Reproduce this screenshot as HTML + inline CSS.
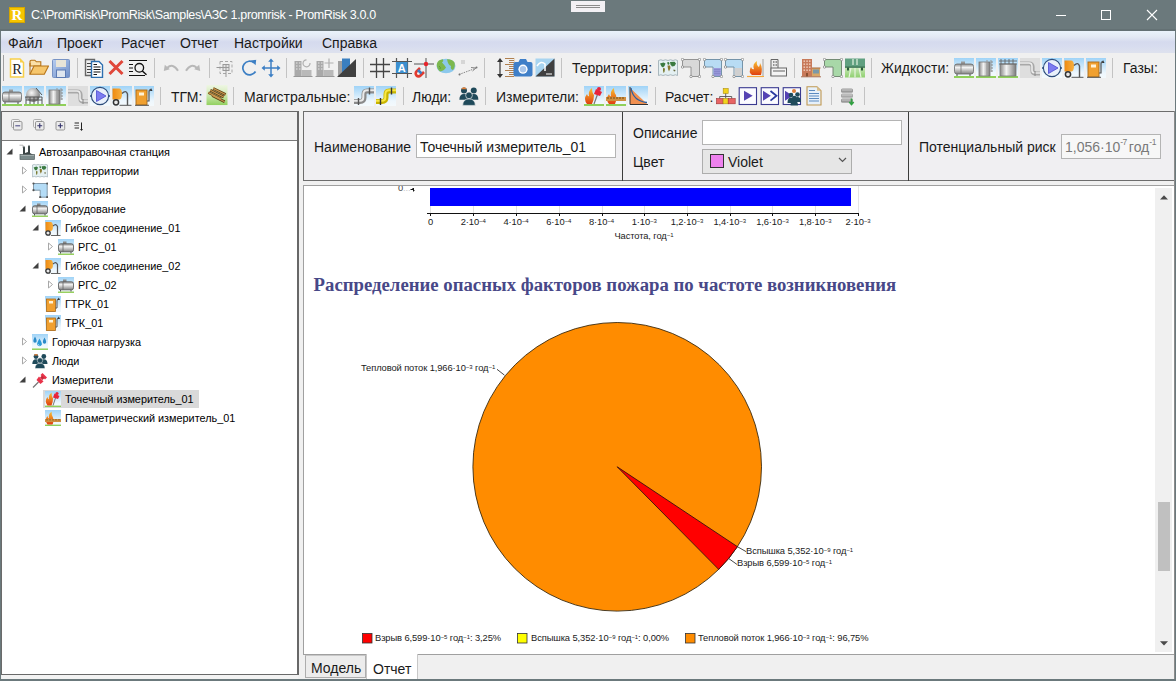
<!DOCTYPE html>
<html><head><meta charset="utf-8"><style>
*{margin:0;padding:0;box-sizing:border-box}
html,body{width:1176px;height:681px;overflow:hidden;background:#f0f0f0;font-family:"Liberation Sans",sans-serif;color:#000}
.a{position:absolute}
.mi{position:absolute;top:35px;font-size:14px;color:#1a1a1a;white-space:nowrap;line-height:16px}
.tb{position:absolute;font-size:14px;color:#1a1a1a;white-space:nowrap;line-height:16px}
.sep{position:absolute;width:1px;background:#c3c3c3}
.ic{position:absolute;overflow:visible}
.tr{position:absolute;font-size:10.85px;color:#000;white-space:nowrap;line-height:13px}
.lbl{position:absolute;font-size:14px;color:#1a1a1a;white-space:nowrap;line-height:16px}
.ch{position:absolute;font-size:9.35px;color:#1a1a1a;white-space:nowrap;line-height:10px;letter-spacing:-0.1px}
.ch sup{font-size:6px;vertical-align:top;position:relative;top:1px;line-height:6px;margin-left:0.2px}
.lbl sup{font-size:9px;vertical-align:top;position:relative;top:-1px;line-height:9px}
.wb{position:absolute;background:#6b797c}
</style></head><body>
<svg width="0" height="0" style="position:absolute">
<defs>
<linearGradient id="sky" x1="0" y1="0" x2="0" y2="1"><stop offset="0" stop-color="#9fd3f7"/><stop offset="0.75" stop-color="#eef7fd"/><stop offset="1" stop-color="#f4f9fc"/></linearGradient>
<linearGradient id="cyl" x1="0" y1="0" x2="0" y2="1"><stop offset="0" stop-color="#8c8c8c"/><stop offset="0.35" stop-color="#f2f2f2"/><stop offset="1" stop-color="#808080"/></linearGradient>
<linearGradient id="cylv" x1="0" y1="0" x2="1" y2="0"><stop offset="0" stop-color="#888"/><stop offset="0.4" stop-color="#f4f4f4"/><stop offset="1" stop-color="#7a7a7a"/></linearGradient>
<radialGradient id="sph" cx="0.4" cy="0.35" r="0.7"><stop offset="0" stop-color="#f8f8f8"/><stop offset="1" stop-color="#777"/></radialGradient>
<linearGradient id="orng" x1="0" y1="0" x2="1" y2="0"><stop offset="0" stop-color="#f08a10"/><stop offset="1" stop-color="#f6b040"/></linearGradient>
<linearGradient id="fire" x1="0" y1="0" x2="0" y2="1"><stop offset="0" stop-color="#f8c030"/><stop offset="1" stop-color="#e04010"/></linearGradient>
<linearGradient id="flop" x1="0" y1="0" x2="1" y2="1"><stop offset="0" stop-color="#b8cdf0"/><stop offset="1" stop-color="#6f8fc8"/></linearGradient>

<!-- toolbar 1 -->
<symbol id="t-r" viewBox="0 0 20 20"><path d="M1.5 1H11L14.5 4.5V19H1.5Z" fill="#fff" stroke="#f7cf4a" stroke-width="1.5"/><path d="M11 1V4.5H14.5Z" fill="#f7cf4a"/><text x="8" y="15.8" font-family="Liberation Serif" font-size="14.5" text-anchor="middle" fill="#222">R</text></symbol>
<symbol id="t-open" viewBox="0 0 20 20"><path d="M1 3.5Q1 2.2 2.3 2.2H5.8L7.4 3.8H11.8V8H1Z" fill="#fbe0a8" stroke="#b67418" stroke-width="1.1"/><path d="M1 16.2V5" stroke="#b67418" stroke-width="1.1"/><path d="M1 16.2L5 8H19.5L15.3 16.2Z" fill="#f6c66c" stroke="#b67418" stroke-width="1.1"/></symbol>
<symbol id="t-save" viewBox="0 0 20 20"><rect x="1.5" y="1.5" width="17" height="18" rx="1" fill="url(#flop)" stroke="#7893c4" stroke-width="1"/><rect x="5" y="2" width="10" height="7" fill="#e8e4d8"/><rect x="5.5" y="12" width="9" height="7.5" fill="#dfe6ef" stroke="#5d7bb3" stroke-width="1"/></symbol>
<symbol id="t-copy" viewBox="0 0 20 20"><path d="M1.5 1.5H10.5V17.5H1.5Z" fill="#eee" stroke="#666" stroke-width="1.4"/><path d="M3 5.5H8M3 8.5H8M3 11.5H8M3 14.5H8" stroke="#444" stroke-width="1"/><path d="M7.5 3.5H15L18.5 7V19.5H7.5Z" fill="#fff" stroke="#2d6fb0" stroke-width="1.4"/><path d="M9.5 6.5H13M9.5 9H16.5M9.5 11.5H16.5M9.5 14H16.5M9.5 16.5H13" stroke="#111" stroke-width="1.2"/></symbol>
<symbol id="t-del" viewBox="0 0 20 20"><path d="M3.5 3L16.5 16M16.5 3L3.5 16" stroke="#e0473a" stroke-width="3"/></symbol>
<symbol id="t-find" viewBox="0 0 20 20"><path d="M1 2.5H19M1 17.5H17M1 6.5H5M1 10H5M1 13.5H5" stroke="#111" stroke-width="1.1"/><circle cx="11.3" cy="9.8" r="4.3" fill="none" stroke="#111" stroke-width="1.3"/><path d="M14.3 13L18.5 16.8" stroke="#111" stroke-width="1.5"/></symbol>
<symbol id="t-undo" viewBox="0 0 20 20"><path d="M17 12.8Q12 4.5 6 10" fill="none" stroke="#b8b8b8" stroke-width="2"/><path d="M2.8 13L3.8 6.8L8.8 11.2Z" fill="#b8b8b8"/></symbol>
<symbol id="t-redo" viewBox="0 0 20 20"><g transform="translate(20 0) scale(-1 1)"><path d="M17 12.8Q12 4.5 6 10" fill="none" stroke="#b8b8b8" stroke-width="2"/><path d="M2.8 13L3.8 6.8L8.8 11.2Z" fill="#b8b8b8"/></g></symbol>
<symbol id="t-sel" viewBox="0 0 20 20"><path d="M4 3.5H16V15.5H4Z" fill="none" stroke="#a8a8a8" stroke-width="1" stroke-dasharray="3 2"/><rect x="7" y="6.5" width="6" height="6" fill="#e4e4e4" stroke="#999" stroke-width="1"/><path d="M10 6.5V12.5M7 9.5H13M0.5 9.5H7M10 12.5V19" stroke="#999" stroke-width="1"/></symbol>
<symbol id="t-rot" viewBox="0 0 20 20"><path d="M15 4.8A6.8 6.8 0 1 0 16.5 13.5" fill="none" stroke="#3c7fc4" stroke-width="1.7"/><path d="M12 2.6L17.2 1.8L16.6 7.2Z" fill="#3c7fc4"/></symbol>
<symbol id="t-move" viewBox="0 0 20 20"><path d="M10 2V18M2 10H18" stroke="#3c7fc4" stroke-width="1.5"/><path d="M10 0.5L12.8 3.8H7.2ZM10 19.5L12.8 16.2H7.2ZM0.5 10L3.8 7.2V12.8ZM19.5 10L16.2 7.2V12.8Z" fill="#3c7fc4"/></symbol>
<symbol id="t-b1" viewBox="0 0 20 20"><rect x="1.5" y="3" width="7" height="15" fill="#a9a9a9"/><path d="M3 5H4.5M6 5H7.5M3 8H4.5M6 8H7.5M3 11H4.5M6 11H7.5" stroke="#e8e8e8" stroke-width="1.2"/><rect x="8.5" y="12" width="10" height="6" fill="#b9b9b9"/><path d="M0.5 18.5H19.5" stroke="#999" stroke-width="1"/><path d="M17 5A3.5 3.5 0 1 1 13.5 1.8" fill="none" stroke="#b0b0b0" stroke-width="1.2"/></symbol>
<symbol id="t-b2" viewBox="0 0 20 20"><rect x="1.5" y="3" width="7" height="15" fill="#a9a9a9"/><path d="M3 5H4.5M6 5H7.5M3 8H4.5M6 8H7.5M3 11H4.5M6 11H7.5" stroke="#e8e8e8" stroke-width="1.2"/><rect x="8.5" y="12" width="10" height="6" fill="#b9b9b9"/><path d="M0.5 18.5H19.5" stroke="#999" stroke-width="1"/><path d="M14 0.5V10M9.5 5H18.5" stroke="#b0b0b0" stroke-width="1.2"/></symbol>
<symbol id="t-b3" viewBox="0 0 20 20"><rect x="1" y="3" width="7" height="16" fill="#a0a0a0"/><rect x="5" y="0.5" width="8" height="18" fill="#3a7fc0"/><path d="M0 19L19 1V19Z" fill="#404040"/></symbol>
<symbol id="t-grid" viewBox="0 0 20 20"><path d="M0 6.5H20M0 13.5H20M6.5 0V20M13.5 0V20" stroke="#444" stroke-width="1.3"/></symbol>
<symbol id="t-grida" viewBox="0 0 20 20"><path d="M0 3.5H20M0 15.5H20M4.5 0V20M15.5 0V20" stroke="#555" stroke-width="1.2"/><rect x="4" y="4" width="11.5" height="11" fill="#3b8fd0"/><text x="9.8" y="14" font-family="Liberation Sans" font-weight="bold" font-size="11" text-anchor="middle" fill="#fff">A</text></symbol>
<symbol id="t-mag" viewBox="0 0 20 20"><path d="M0 6H20M12 0V20" stroke="#555" stroke-width="1"/><path d="M6 10L2.5 13.5A2.5 2.5 0 0 0 6.5 17.5L10 14" fill="none" stroke="#e23a2e" stroke-width="2.6"/><path d="M4 12L7.5 15.5" stroke="#3c7fc4" stroke-width="2.6"/><circle cx="12" cy="6" r="2.2" fill="#e8232a"/></symbol>
<symbol id="t-globe" viewBox="0 0 20 20"><ellipse cx="10" cy="8" rx="9.5" ry="7.3" fill="#8cc8ec"/><path d="M0.8 6Q2 1.5 7 1.2Q8 3 6 4.5Q8.5 7 10 9.5Q8 13 4 13.5Q0.5 11 0.8 6ZM11 1.2Q16 1 18.5 4.5Q19.5 8.5 17 12Q14 11 15 8Q12 7 11 1.2Z" fill="#7cb84e"/><path d="M3 8Q5 9 4 11" stroke="#5a9a3a" stroke-width="1" fill="none"/></symbol>
<symbol id="t-route" viewBox="0 0 20 20"><path d="M1 16.5L17 10.5" stroke="#888" stroke-width="1" stroke-dasharray="1.5 1"/><path d="M13 9.5L18 10L14.5 13" fill="none" stroke="#888" stroke-width="1"/><circle cx="1.5" cy="16.5" r="1" fill="#777"/><circle cx="18.5" cy="9.5" r="1" fill="#777"/><path d="M3 3H7M3 5H7" stroke="#bbb" stroke-width="1.2"/></symbol>
<symbol id="t-varr" viewBox="0 0 10 20"><path d="M5 2V18" stroke="#333" stroke-width="1.2"/><path d="M5 0L8 4H2ZM5 20L8 16H2Z" fill="#333"/></symbol>
<symbol id="t-ruler" viewBox="0 0 12 20"><path d="M1 0.5H11M5 2.5H11M5 4.5H11M1 6.5H11M5 8.5H11M5 10.5H11M1 12.5H11M5 14.5H11M5 16.5H11M1 18.5H11" stroke="#b08050" stroke-width="1"/><path d="M10.5 0V19" stroke="#e8d8c0" stroke-width="1"/></symbol>
<symbol id="t-cam" viewBox="0 0 20 20"><rect x="0.5" y="4" width="19" height="14.5" rx="2" fill="#3f7fc8"/><path d="M5.5 4L7 1H13L14.5 4Z" fill="#3f7fc8"/><circle cx="10" cy="11.2" r="4.6" fill="#fff"/><circle cx="10" cy="11.2" r="3.2" fill="#a9c6ea"/></symbol>
<symbol id="t-img" viewBox="0 0 20 20"><rect x="0.5" y="0.5" width="19" height="18" fill="#a8d4f0"/><path d="M0.5 18.5L19.5 0.5V18.5Z" fill="#404040"/><path d="M2 8Q6 2 10 6V13" fill="none" stroke="#fff" stroke-width="1.5"/><path d="M11 16H17" stroke="#fff" stroke-width="1"/></symbol>
<symbol id="t-map" viewBox="0 0 20 20"><path d="M0.5 2.5Q3 1 5 2.5Q7.5 1 10 2.5Q12.5 1 15 2.5Q17.5 1 19.5 2.5V17.5Q17.5 16 15 17.5Q12.5 16 10 17.5Q7.5 16 5 17.5Q3 16 0.5 17.5Z" fill="#e4f0f2" stroke="#98a8b0" stroke-width="0.8"/><path d="M2 5.5L5.5 4.5L7.5 5.5L6.5 8L5 9.5L3.5 8.5Z" fill="#3a7a40"/><path d="M5 10L7 10.5L6.5 14L5.5 15L5 12.5Z" fill="#7a7a30"/><path d="M9 4.5L11 4L11.5 6L10 7Z" fill="#3a7a40"/><path d="M9.5 7.5L12 7.5L12.5 10L11 13.5L10 11Z" fill="#8a7a30"/><path d="M12 4L16.5 3.8L18 5.5L16.5 8L14 8.5L12.5 6.5Z" fill="#3a7a40"/><path d="M15.5 11.5L17.5 12L17 13.5L15.5 13Z" fill="#6a6a40"/></symbol>
<symbol id="t-lgray" viewBox="0 0 20 20"><path d="M1.5 1.5H18.5V18.5H10V9H1.5Z" fill="#d8d8d8" stroke="#8a8a8a" stroke-width="0.9"/><g fill="#fff" stroke="#777" stroke-width="0.7"><circle cx="1.5" cy="1.5" r="1.2"/><circle cx="18.5" cy="1.5" r="1.2"/><circle cx="18.5" cy="18.5" r="1.2"/><circle cx="10" cy="18.5" r="1.2"/><circle cx="1.5" cy="9" r="1.2"/></g></symbol>
<symbol id="t-lblue" viewBox="0 0 20 20"><path d="M1.5 1.5H18.5V18.5H10V9H1.5Z" fill="#b8dcf4" stroke="#6a8aa0" stroke-width="0.9"/><rect x="10.5" y="10" width="7.5" height="8" fill="#a0a0e0"/><path d="M11 11.5H17.5M11 13.5H17.5M11 15.5H17.5M12 10.5V18M14 10.5V18M16 10.5V18" stroke="#7a7ac0" stroke-width="0.5"/><g fill="#fff" stroke="#777" stroke-width="0.7"><circle cx="1.5" cy="1.5" r="1.2"/><circle cx="18.5" cy="1.5" r="1.2"/><circle cx="18.5" cy="18.5" r="1.2"/><circle cx="10" cy="18.5" r="1.2"/><circle cx="1.5" cy="9" r="1.2"/></g></symbol>
<symbol id="t-lbgray" viewBox="0 0 20 20"><path d="M1.5 1.5H18.5V18.5H10V9H1.5Z" fill="#b8dcf4" stroke="#6a8aa0" stroke-width="0.9"/><rect x="10.5" y="10" width="7.5" height="8" fill="#d0d0d0"/><g fill="#fff" stroke="#777" stroke-width="0.7"><circle cx="1.5" cy="1.5" r="1.2"/><circle cx="18.5" cy="1.5" r="1.2"/><circle cx="18.5" cy="18.5" r="1.2"/><circle cx="10" cy="18.5" r="1.2"/><circle cx="1.5" cy="9" r="1.2"/></g></symbol>
<symbol id="t-fire" viewBox="0 0 20 20"><path d="M17 1V18" stroke="#c8c8c8" stroke-width="2"/><path d="M1 18.5H18" stroke="#f4a840" stroke-width="1.2"/><path d="M6 17Q2 14 5 9Q6 12 8 11Q6 6 11 3Q10 7 13 9Q14 7 14 5Q17 10 15 17Z" fill="url(#fire)"/></symbol>
<symbol id="t-bld" viewBox="0 0 20 20"><path d="M3 18V1.5H10V10" fill="#eee" stroke="#666" stroke-width="1"/><rect x="3" y="10" width="15.5" height="8" fill="#f4f4f4" stroke="#666" stroke-width="1"/><path d="M5 4H6.5M7.5 4H9M5 7H6.5M7.5 7H9" stroke="#777" stroke-width="1.3"/><path d="M5 13H17" stroke="#777" stroke-width="1.2"/></symbol>
<symbol id="t-brick" viewBox="0 0 20 20"><rect x="1" y="1" width="10" height="17.5" fill="#c87a5a"/><g fill="#f4d8c8"><rect x="2.5" y="2.5" width="1.5" height="1.3"/><rect x="5.3" y="2.5" width="1.5" height="1.3"/><rect x="8" y="2.5" width="1.5" height="1.3"/><rect x="2.5" y="5.5" width="1.5" height="1.3"/><rect x="5.3" y="5.5" width="1.5" height="1.3"/><rect x="8" y="5.5" width="1.5" height="1.3"/><rect x="2.5" y="8.5" width="1.5" height="1.3"/><rect x="5.3" y="8.5" width="1.5" height="1.3"/><rect x="8" y="8.5" width="1.5" height="1.3"/><rect x="2.5" y="11.5" width="1.5" height="1.3"/><rect x="5.3" y="11.5" width="1.5" height="1.3"/><rect x="8" y="11.5" width="1.5" height="1.3"/></g><rect x="5" y="15" width="2" height="3.5" fill="#8a5030"/><rect x="11" y="10" width="8" height="8.5" fill="#d8a868"/><rect x="11" y="9.5" width="8.5" height="1" fill="#a86838"/><rect x="12" y="11.5" width="6" height="4" fill="#7a98a8"/><path d="M0 18.8H20" stroke="#a06040" stroke-width="0.9"/></symbol>
<symbol id="t-lgreen" viewBox="0 0 20 20"><path d="M1.5 1.5H18.5V18.5H10V9H1.5Z" fill="#a8d8a8" stroke="#6a806a" stroke-width="0.9"/><g fill="#fff" stroke="#777" stroke-width="0.7"><circle cx="1.5" cy="1.5" r="1.2"/><circle cx="18.5" cy="1.5" r="1.2"/><circle cx="18.5" cy="18.5" r="1.2"/><circle cx="10" cy="18.5" r="1.2"/><circle cx="1.5" cy="9" r="1.2"/></g></symbol>
<symbol id="t-road" viewBox="0 0 20 20"><defs><linearGradient id="rg" x1="0" y1="0" x2="0" y2="1"><stop offset="0" stop-color="#c8e8b8"/><stop offset="1" stop-color="#90d070"/></linearGradient></defs><rect x="0" y="9" width="20" height="10.5" fill="url(#rg)"/><path d="M6 9.5L4 19.5M14 9.5L16 19.5M10 9.5V19.5" stroke="#e8f4e0" stroke-width="1.2"/><rect x="0" y="0.5" width="20" height="9" fill="#60a080"/><path d="M8 1V7M12 1V7" stroke="#d8ecd8" stroke-width="1.3"/><rect x="0" y="8.5" width="20" height="1.2" fill="#3a7050"/><rect x="2" y="9.5" width="2" height="3" fill="#2a5a3a"/><rect x="16" y="9.5" width="2" height="3" fill="#2a5a3a"/></symbol>
<!-- liquids -->
<symbol id="t-tank" viewBox="0 0 20 20"><rect x="0" y="0" width="20" height="19" fill="url(#sky)"/><rect x="0" y="18" width="20" height="2" fill="#8fd05a"/><rect x="7" y="3.5" width="4" height="3" fill="#999"/><rect x="0.5" y="6" width="19" height="10" rx="2.5" fill="url(#cyl)" stroke="#6a6a6a" stroke-width="0.8"/><path d="M7 6V16" stroke="#777" stroke-width="0.8"/><path d="M3 16V18M16 16V18" stroke="#666" stroke-width="1.2"/></symbol>
<symbol id="t-silo" viewBox="0 0 20 20"><rect x="0" y="0" width="20" height="19" fill="url(#sky)"/><rect x="0" y="18" width="20" height="2" fill="#8fd05a"/><rect x="3" y="4" width="11" height="14" fill="url(#cylv)" stroke="#777" stroke-width="0.8"/><path d="M11 2V18M15 2V14" stroke="#999" stroke-width="1"/><path d="M15 4H17M15 7H17M15 10H17M15 13H17" stroke="#888" stroke-width="1"/></symbol>
<symbol id="t-tank2" viewBox="0 0 20 20"><rect x="0" y="0" width="20" height="19" fill="url(#sky)"/><rect x="0" y="18" width="20" height="2" fill="#8fd05a"/><rect x="2" y="6" width="16" height="12" fill="url(#cylv)" stroke="#777" stroke-width="0.8"/><path d="M1 3H19M1 6H19M3 1V6M7 1V6M11 1V6M15 1V6" stroke="#666" stroke-width="0.9"/></symbol>
<symbol id="t-pipe" viewBox="0 0 20 20"><rect x="0" y="0" width="20" height="20" fill="#dedede"/><path d="M0 5.5H9Q12.5 5.5 12.5 9V12.5Q12.5 15.5 15.5 15.5H20" fill="none" stroke="#a8a8a8" stroke-width="4.2"/><path d="M0 5H9Q12 5 12 8.5V12.5Q12 15 15.5 15H20" fill="none" stroke="#ececec" stroke-width="1.6"/><path d="M15 13V18" stroke="#888" stroke-width="1"/></symbol>
<symbol id="t-pump" viewBox="0 0 20 20"><rect x="0" y="0" width="20" height="20" fill="url(#sky)"/><circle cx="10" cy="10" r="8.6" fill="#e8f0fb" stroke="#2b4b7a" stroke-width="1.1"/><path d="M6.5 4.5L16 10L6.5 15.5Z" fill="#7c7cf0" stroke="#4a4ad0" stroke-width="0.8"/><path d="M0 10H1.5M18.5 10H20" stroke="#2b4b7a" stroke-width="1.4"/></symbol>
<symbol id="t-flex" viewBox="0 0 20 20"><rect x="0" y="0" width="20" height="20" fill="url(#sky)"/><path d="M0.5 2.5H7Q10 2.5 10 8Q10 13.5 7 13.5H0.5Z" fill="url(#orng)"/><path d="M10 7.5Q14 3.5 15.5 8V19.2" fill="none" stroke="#555" stroke-width="1.4"/><circle cx="4" cy="16.3" r="2.6" fill="#e8e8e8" stroke="#333" stroke-width="1.5"/><path d="M7.5 19.3H19.5" stroke="#555" stroke-width="1"/></symbol>
<symbol id="t-disp" viewBox="0 0 20 20"><rect x="0" y="0" width="20" height="20" fill="url(#sky)"/><rect x="2" y="4" width="11" height="15" fill="#f0a030" stroke="#a86818" stroke-width="0.9"/><rect x="5" y="6.5" width="5" height="3" fill="#fff3d8"/><path d="M13 15H15V6Q15 3.5 17 3.5" fill="none" stroke="#555" stroke-width="1.2"/><path d="M17 2L18.5 5H16Z" fill="#333"/><path d="M1 19.3H15" stroke="#555" stroke-width="1"/></symbol>
<symbol id="t-sphere" viewBox="0 0 20 20"><rect x="0" y="0" width="20" height="19" fill="url(#sky)"/><rect x="0" y="18" width="20" height="2" fill="#8fd05a"/><circle cx="9" cy="9" r="7" fill="url(#sph)"/><path d="M1 11H18M2 14H18M2 11V18M6 11V18M10 11V18M14 11V18M18 11V18M12 2L18 9" stroke="#555" stroke-width="1"/></symbol>
<!-- toolbar 2 others -->
<symbol id="t-tgm" viewBox="0 0 22 22"><defs><linearGradient id="gg" x1="0" y1="0" x2="0" y2="1"><stop offset="0" stop-color="#eef6e4"/><stop offset="0.45" stop-color="#d4ecb8"/><stop offset="1" stop-color="#92d060"/></linearGradient></defs><rect x="0" y="0" width="22" height="21" fill="url(#gg)"/><path d="M2 8L15 14.5M4 5.5L18 12.5M7 3.5L20 10M6 11L19 17.5" stroke="#5a3a10" stroke-width="2.8"/><path d="M2 8L15 14.5M4 5.5L18 12.5M7 3.5L20 10M6 11L19 17.5" stroke="#c89850" stroke-width="1.3"/></symbol>
<symbol id="t-spipe" viewBox="0 0 20 20"><rect x="0" y="0" width="20" height="20" fill="url(#sky)"/><path d="M20 5H13Q10 5 10 8.5V11.5Q10 15.5 6 15.5H0" fill="none" stroke="#8a8a8a" stroke-width="5"/><path d="M20 4.3H13Q9.3 4.3 9.3 8.5V11.5Q9.3 14.8 6 14.8H0" fill="none" stroke="#eaeaea" stroke-width="2"/><path d="M15.5 1.5V8.5M4.5 12V19" stroke="#555" stroke-width="1.4"/></symbol>
<symbol id="t-ypipe" viewBox="0 0 20 20"><rect x="0" y="0" width="20" height="20" fill="url(#sky)"/><path d="M20 5H13Q10 5 10 8.5V11.5Q10 15.5 6 15.5H0" fill="none" stroke="#c8b400" stroke-width="5"/><path d="M20 4.3H13Q9.3 4.3 9.3 8.5V11.5Q9.3 14.8 6 14.8H0" fill="none" stroke="#f8e848" stroke-width="2"/><path d="M15.5 1.5V8.5M4.5 12V19" stroke="#333" stroke-width="1.4"/></symbol>
<symbol id="t-people" viewBox="0 0 16 16"><circle cx="4" cy="3.5" r="2.4" fill="#1f4a5a"/><path d="M1.8 2.5A2.4 2.4 0 0 1 6.2 2.5Z" fill="#e0803a"/><circle cx="11.8" cy="3.5" r="2.4" fill="#1f4a5a"/><path d="M0.3 11Q0.3 6.3 4 6.3Q7.7 6.3 7.7 11ZM8.1 11Q8.1 6.3 11.8 6.3Q15.5 6.3 15.5 11Z" fill="#1f4a5a"/><circle cx="8" cy="7.5" r="2.7" fill="#1f4a5a" stroke="#f0f0f0" stroke-width="0.5"/><path d="M3 15.5Q3 10.3 8 10.3Q13 10.3 13 15.5Z" fill="#1f4a5a" stroke="#f0f0f0" stroke-width="0.5"/></symbol>
<symbol id="t-m1" viewBox="0 0 20 20"><rect x="0" y="0" width="20" height="20" fill="url(#sky)"/><path d="M0 19H20" stroke="#8fd05a" stroke-width="2"/><path d="M3 18Q-1 13 3 8Q4 11 5 10Q4 5 8 2Q8 7 10 9Q10 14 8 18Z" fill="url(#fire)"/><path d="M10 18L14 7" stroke="#777" stroke-width="1.2"/><path d="M12 3L18 6L16 10L10 8Z" fill="#e8233a"/><circle cx="15" cy="3" r="2" fill="#e8233a"/></symbol>
<symbol id="t-m2" viewBox="0 0 20 20"><rect x="0" y="0" width="20" height="20" fill="url(#sky)"/><path d="M0 19H20" stroke="#8fd05a" stroke-width="2"/><path d="M3 18Q-1 13 3 8Q4 11 5 10Q4 5 8 2Q8 7 10 9Q11 14 9 18Z" fill="url(#fire)"/><rect x="0" y="11" width="20" height="4" fill="#d09040"/><path d="M2 11V13M5 11V13M8 11V13M11 11V13M14 11V13M17 11V13" stroke="#7a4a10" stroke-width="1"/></symbol>
<symbol id="t-m3" viewBox="0 0 20 20"><rect x="0" y="0" width="20" height="20" fill="url(#sky)"/><path d="M2 2Q3 15 19 18" fill="#f0a060" stroke="none"/><path d="M2 2V18H19" fill="#f09050" stroke="none"/><path d="M2 1V18.5H20" fill="none" stroke="#333" stroke-width="1"/><path d="M3 2Q5 15 19 16.5" fill="none" stroke="#2a5fa0" stroke-width="1.3"/></symbol>
<symbol id="t-hier" viewBox="0 0 20 20"><rect x="7.2" y="2.5" width="5" height="5" fill="#f2d41c" stroke="#b09010" stroke-width="0.6"/><path d="M9.7 7.5V10.5M3.7 10.5H15.7M3.7 10.5V12.6M15.7 10.5V12.6M9.7 10.5V12.6" stroke="#555" stroke-width="0.9"/><rect x="0.5" y="12.6" width="6.6" height="5.2" fill="#e86464" stroke="#a03030" stroke-width="0.6"/><rect x="7.1" y="12.6" width="5.1" height="5.2" fill="#f2d41c" stroke="#b09010" stroke-width="0.6"/><rect x="12.2" y="12.6" width="7" height="5.2" fill="#e86464" stroke="#a03030" stroke-width="0.6"/></symbol>
<symbol id="t-play" viewBox="0 0 20 20"><rect x="1.2" y="1.7" width="17.3" height="16.8" fill="#fbfbff" stroke="#3a3a90" stroke-width="1.1"/><path d="M6 4.7L14.7 9.8L6 14.8Z" fill="#5542b4"/></symbol>
<symbol id="t-ff" viewBox="0 0 20 20"><rect x="1.2" y="1.7" width="17.3" height="16.8" fill="#fbfbff" stroke="#3a3a90" stroke-width="1.1"/><path d="M3 4.7L10.8 9.8L3 14.8Z" fill="#5542b4"/><path d="M10.5 5L16.5 9.8L10.5 14.6" fill="none" stroke="#2a3aa0" stroke-width="1.8"/></symbol>
<symbol id="t-calcp" viewBox="0 0 20 20"><rect x="1.2" y="1.7" width="17.3" height="16.8" fill="#fbfbff" stroke="#3a3a90" stroke-width="1.1"/><path d="M3 4.7L10.8 9.8L3 14.8Z" fill="#5542b4"/><circle cx="12" cy="5" r="2" fill="#e0803a"/><circle cx="9" cy="9" r="2.3" fill="#1f4a5a"/><circle cx="15.5" cy="8.5" r="2.3" fill="#1f4a5a"/><path d="M5.5 17Q5.5 11.5 9 11.5Q12.5 11.5 12.5 17ZM12 16Q12 11 15.5 11Q19 11 19 16Z" fill="#1f4a5a"/><circle cx="12.3" cy="12" r="2.3" fill="#1f4a5a"/><path d="M8.5 19.5Q8.5 14.5 12.3 14.5Q16 14.5 16 19.5Z" fill="#1f4a5a"/></symbol>
<symbol id="t-doc" viewBox="0 0 20 20"><path d="M3 0.8H13L17 4.8V19H3Z" fill="#e6f0fa" stroke="#c09850" stroke-width="1.1"/><path d="M13 0.8V4.8H17Z" fill="#d8c090"/><path d="M5 4.5H11M5 7.5H15M5 10H15M5 12.5H15M5 15H15" stroke="#5a8ac0" stroke-width="1"/></symbol>
<symbol id="t-db" viewBox="0 0 20 20"><rect x="4" y="2.5" width="12" height="4.3" rx="1.5" fill="#9a9a9a"/><rect x="4" y="7.5" width="12" height="4.3" rx="1.5" fill="#a8a8a8"/><rect x="4" y="12.5" width="12" height="4.3" rx="1.5" fill="#9a9a9a"/><path d="M5 4H15M5 9H15M5 14H15" stroke="#d8d8d8" stroke-width="0.8"/><path d="M14.5 12.5V18.5M12.3 16L14.5 18.5L16.7 16" fill="none" stroke="#30a040" stroke-width="1.6"/></symbol>
<!-- left tree toolbar -->
<symbol id="l-collapse" viewBox="0 0 12 12"><rect x="0.5" y="0.5" width="8" height="8" rx="1.2" fill="#f4f4f4" stroke="#a8a8a8" stroke-width="0.9"/><rect x="2.5" y="2.5" width="8.5" height="8.5" rx="1.2" fill="#ececec" stroke="#8a8a8a" stroke-width="0.9"/><path d="M4.3 6.8H9.2" stroke="#50508a" stroke-width="1.1"/></symbol>
<symbol id="l-expand" viewBox="0 0 12 12"><rect x="0.5" y="0.5" width="8" height="8" rx="1.2" fill="#f4f4f4" stroke="#a8a8a8" stroke-width="0.9"/><rect x="2.5" y="2.5" width="8.5" height="8.5" rx="1.2" fill="#ececec" stroke="#8a8a8a" stroke-width="0.9"/><path d="M4.3 6.8H9.2M6.75 4.3V9.3" stroke="#30306a" stroke-width="1.1"/></symbol>
<symbol id="l-plus" viewBox="0 0 12 12"><rect x="1" y="2.5" width="8.7" height="8.5" rx="1.2" fill="#ececec" stroke="#8a8a8a" stroke-width="0.9"/><path d="M2.9 6.8H7.8M5.35 4.3V9.3" stroke="#30306a" stroke-width="1.1"/></symbol>
<symbol id="l-sort" viewBox="0 0 12 12"><path d="M0.6 4H5M0.6 6.5H5M0.6 9H5" stroke="#222" stroke-width="1.1"/><path d="M0.6 6.5H5" stroke="#888" stroke-width="1.1"/><path d="M7.5 3.5V10.5" stroke="#222" stroke-width="1"/><path d="M6 10L7.5 12L9 10Z" fill="#222"/></symbol>
<!-- tree icons 16x16 -->
<symbol id="i-factory" viewBox="0 0 16 16"><path d="M0.5 1.2H4V4" fill="none" stroke="#b8b8b8" stroke-width="1"/><path d="M4 11V3.5L5 1.8L6 3.5V9L9 8V2.5L10 0.8L11 2.5V9L14.5 11Z" fill="#3a4444"/><rect x="1" y="10.5" width="14.5" height="5" fill="#7a8a8a" stroke="#556060" stroke-width="0.7"/><path d="M1.5 11.5H15" stroke="#aab4b4" stroke-width="0.8"/></symbol>
<symbol id="i-map-old" viewBox="0 0 16 16"><path d="M0.5 1.5Q4 0 8 1.5Q12 0 15.5 1.5V13.5Q12 12 8 13.5Q4 12 0.5 13.5Z" fill="#e4f2f2" stroke="#9aa8b0" stroke-width="0.8"/><path d="M2 4L5 3.5L6 5L5 6.5H3.5ZM8 3.5L12.5 3L14 4.5L12 6L9.5 5.5Z" fill="#2e6a38"/><path d="M4 7L5.5 7.5L5 11L4.2 10ZM9 6.5L11 6.8L10.5 10.5L9.5 11Z" fill="#8a7030"/><rect x="13" y="9" width="1.2" height="1" fill="#335"/></symbol>
<symbol id="i-terr" viewBox="0 0 16 16"><path d="M1.5 1.5H15.2V15.2H8.2V8.2H1.5Z" fill="#b4dcf6" stroke="#7890a0" stroke-width="0.9"/><circle cx="1.5" cy="1.5" r="1.1" fill="#555"/><circle cx="15.2" cy="1.5" r="1.1" fill="#555"/><circle cx="1.5" cy="8.2" r="1.1" fill="#555"/><circle cx="8.2" cy="15.2" r="1.1" fill="#555"/><circle cx="15.2" cy="15.2" r="1.1" fill="#555"/></symbol>
<symbol id="i-tank" viewBox="0 0 16 16"><rect x="0" y="0" width="16" height="15" fill="url(#sky)"/><rect x="0" y="14.5" width="16" height="1.5" fill="#98d060"/><rect x="5" y="2.5" width="3.5" height="2.5" fill="#888"/><rect x="0.5" y="4.8" width="15" height="8" rx="2" fill="url(#cyl)" stroke="#555" stroke-width="0.8"/><path d="M5 4.8V12.8" stroke="#666" stroke-width="0.8"/><path d="M2.5 12.8V14.5M13 12.8V14.5" stroke="#555" stroke-width="1"/></symbol>
<symbol id="i-flex" viewBox="0 0 16 16"><rect x="0" y="0" width="16" height="16" fill="url(#sky)"/><path d="M0.5 2H5.5Q8 2 8 6.5Q8 11 5.5 11H0.5Z" fill="url(#orng)"/><path d="M8 6Q11 3 12.5 6.5V15.5" fill="none" stroke="#555" stroke-width="1.2"/><circle cx="3" cy="13" r="2.2" fill="#e8e8e8" stroke="#333" stroke-width="1.3"/><path d="M6 15.5H15.5" stroke="#555" stroke-width="0.9"/></symbol>
<symbol id="i-disp" viewBox="0 0 16 16"><rect x="0" y="0" width="16" height="16" fill="url(#sky)"/><rect x="1.5" y="3" width="9" height="12.5" fill="#f0a030" stroke="#a86818" stroke-width="0.8"/><rect x="4" y="5" width="4" height="2.5" fill="#fff3d8"/><path d="M10.5 12H12V5Q12 2.8 13.8 2.8" fill="none" stroke="#555" stroke-width="1"/><path d="M13.8 1.5L15 4H12.6Z" fill="#333"/></symbol>
<symbol id="i-drops" viewBox="0 0 16 16"><rect x="0" y="0" width="16" height="14.5" fill="url(#sky)"/><path d="M0 15.2H16" stroke="#8fd05a" stroke-width="1.5"/><path d="M3 2.5Q1 6 1.3 7A1.7 1.7 0 0 0 4.7 7Q5 6 3 2.5Z" fill="#2a8ac8"/><path d="M12.5 3.5Q10.5 7 10.8 8A1.7 1.7 0 0 0 14.2 8Q14.5 7 12.5 3.5Z" fill="#2a8ac8"/><path d="M7.5 4.5Q4.8 9 5.2 10.5A2.4 2.4 0 0 0 9.8 10.5Q10.2 9 7.5 4.5Z" fill="#2a9ad8"/><path d="M6.5 10A1 1 0 0 0 7.5 11.5" stroke="#fff" stroke-width="0.6" fill="none"/></symbol>
<symbol id="i-people" viewBox="0 0 16 16"><circle cx="4" cy="3.5" r="2.4" fill="#1f4a5a"/><path d="M1.8 2.5A2.4 2.4 0 0 1 6.2 2.5Z" fill="#e0803a"/><circle cx="11.8" cy="3.5" r="2.4" fill="#1f4a5a"/><path d="M0.3 11Q0.3 6.3 4 6.3Q7.7 6.3 7.7 11ZM8.1 11Q8.1 6.3 11.8 6.3Q15.5 6.3 15.5 11Z" fill="#1f4a5a"/><circle cx="8" cy="7.5" r="2.7" fill="#1f4a5a" stroke="#fff" stroke-width="0.5"/><path d="M3 15.5Q3 10.3 8 10.3Q13 10.3 13 15.5Z" fill="#1f4a5a" stroke="#fff" stroke-width="0.5"/></symbol>
<symbol id="i-pin" viewBox="0 0 16 16"><path d="M1 15.5L6.5 10" stroke="#777" stroke-width="1.2"/><path d="M4.5 8L8.5 12L11.5 9.5L7 4.5Z" fill="#e8334a"/><path d="M8.5 3L13 7.5L15 5.5L10.5 1Z" fill="#e8334a"/><path d="M8 5.5L10 3.5L12.5 6L10.5 8Z" fill="#c82838"/></symbol>
<symbol id="i-m1" viewBox="0 0 16 16"><rect x="0" y="0" width="16" height="16" fill="url(#sky)"/><path d="M0 15.3H16" stroke="#8fd05a" stroke-width="1.4"/><path d="M2.5 14.5Q-1 10 2.5 6Q3.3 8.8 4 8Q3.3 4 6.5 1.5Q6.5 5.5 8 7.5Q8 11.5 6.5 14.5Z" fill="url(#fire)"/><path d="M8 14.5L11 5.5" stroke="#777" stroke-width="1"/><path d="M9.5 2.5L14.5 5L13 8L8 6.5Z" fill="#e8233a"/><circle cx="12" cy="2.5" r="1.6" fill="#e8233a"/></symbol>
<symbol id="i-m2" viewBox="0 0 16 16"><rect x="0" y="0" width="16" height="16" fill="url(#sky)"/><path d="M0 15.3H16" stroke="#8fd05a" stroke-width="1.4"/><path d="M2.5 14.5Q-1 10 2.5 6Q3.3 8.8 4 8Q3.3 4 6.5 1.5Q6.5 5.5 8 7.5Q9 11.5 7.5 14.5Z" fill="url(#fire)"/><rect x="0" y="9" width="16" height="3" fill="#d09040"/><path d="M2 9V10.5M5 9V10.5M8 9V10.5M11 9V10.5M14 9V10.5" stroke="#7a4a10" stroke-width="0.8"/></symbol>
<symbol id="i-map" viewBox="0 0 20 20"><use href="#t-map"/></symbol></defs></svg>

<div class="a" style="left:0;top:0;width:1176px;height:31px;background:#6b797c"></div>
<div class="a" style="left:0;top:29px;width:1176px;height:2px;background:#647174"></div>
<div class="a" style="left:9px;top:7px;width:16px;height:16px;background:#f6c500;border:1px solid #d6a600;color:#fff;font-family:'Liberation Serif',serif;font-weight:bold;font-size:15px;line-height:15px;text-align:center">R</div>
<div class="a" style="left:31px;top:8px;font-size:12.5px;letter-spacing:-0.36px;color:#fff;white-space:nowrap;line-height:14px">C:\PromRisk\PromRisk\Samples\АЗС 1.promrisk - PromRisk 3.0.0</div>
<div class="a" style="left:571px;top:1px;width:34px;height:11px;background:#f2f0f4"></div>
<div class="a" style="left:576px;top:5px;width:24px;height:1px;background:#8a8a8a"></div>
<div class="a" style="left:576px;top:7px;width:24px;height:1px;background:#8a8a8a"></div>
<div class="a" style="left:1056px;top:15px;width:10px;height:1px;background:#fff"></div>
<div class="a" style="left:1101px;top:10px;width:10px;height:10px;border:1px solid #fff"></div>
<svg class="a" style="left:1146px;top:9px" width="12" height="12"><path d="M1 1L11 11M11 1L1 11" stroke="#fff" stroke-width="1.1"/></svg>
<div class="a" style="left:1px;top:31px;width:1174px;height:22px;background:linear-gradient(#eaf3fb 0px,#e3e9f4 6px,#d5daee 11px,#d8ddef 16px,#dde1ee 21px)"></div>
<div class="mi" style="left:8px">Файл</div>
<div class="mi" style="left:57px">Проект</div>
<div class="mi" style="left:121px">Расчет</div>
<div class="mi" style="left:180px">Отчет</div>
<div class="mi" style="left:234px">Настройки</div>
<div class="mi" style="left:322px">Справка</div>
<div class="a" style="left:1px;top:53px;width:1174px;height:58px;background:#f0f0f0"></div>
<div class="a" style="left:3px;top:55px;width:1px;height:26px;background:#a0a0a0"></div>
<svg class="ic" style="left:9px;top:58px" width="20" height="20" viewBox="0 0 20 20"><use href="#t-r"/></svg>
<svg class="ic" style="left:29px;top:58px" width="20" height="20" viewBox="0 0 20 20"><use href="#t-open"/></svg>
<svg class="ic" style="left:51px;top:58px" width="20" height="20" viewBox="0 0 20 20"><use href="#t-save"/></svg>
<svg class="ic" style="left:84px;top:58px" width="20" height="20" viewBox="0 0 20 20"><use href="#t-copy"/></svg>
<svg class="ic" style="left:106px;top:58px" width="20" height="20" viewBox="0 0 20 20"><use href="#t-del"/></svg>
<svg class="ic" style="left:128px;top:58px" width="20" height="20" viewBox="0 0 20 20"><use href="#t-find"/></svg>
<svg class="ic" style="left:161px;top:58px" width="20" height="20" viewBox="0 0 20 20"><use href="#t-undo"/></svg>
<svg class="ic" style="left:183px;top:58px" width="20" height="20" viewBox="0 0 20 20"><use href="#t-redo"/></svg>
<svg class="ic" style="left:216px;top:58px" width="20" height="20" viewBox="0 0 20 20"><use href="#t-sel"/></svg>
<svg class="ic" style="left:239px;top:58px" width="20" height="20" viewBox="0 0 20 20"><use href="#t-rot"/></svg>
<svg class="ic" style="left:261px;top:58px" width="20" height="20" viewBox="0 0 20 20"><use href="#t-move"/></svg>
<svg class="ic" style="left:293px;top:58px" width="20" height="20" viewBox="0 0 20 20"><use href="#t-b1"/></svg>
<svg class="ic" style="left:315px;top:58px" width="20" height="20" viewBox="0 0 20 20"><use href="#t-b2"/></svg>
<svg class="ic" style="left:337px;top:58px" width="20" height="20" viewBox="0 0 20 20"><use href="#t-b3"/></svg>
<svg class="ic" style="left:370px;top:58px" width="20" height="20" viewBox="0 0 20 20"><use href="#t-grid"/></svg>
<svg class="ic" style="left:392px;top:58px" width="20" height="20" viewBox="0 0 20 20"><use href="#t-grida"/></svg>
<svg class="ic" style="left:414px;top:58px" width="20" height="20" viewBox="0 0 20 20"><use href="#t-mag"/></svg>
<svg class="ic" style="left:436px;top:58px" width="20" height="20" viewBox="0 0 20 20"><use href="#t-globe"/></svg>
<svg class="ic" style="left:458px;top:58px" width="20" height="20" viewBox="0 0 20 20"><use href="#t-route"/></svg>
<svg class="ic" style="left:490px;top:58px" width="20" height="20" viewBox="0 0 20 20"><use href="#t-varr"/></svg>
<svg class="ic" style="left:500px;top:58px" width="20" height="20" viewBox="0 0 20 20"><use href="#t-ruler"/></svg>
<svg class="ic" style="left:513px;top:58px" width="20" height="20" viewBox="0 0 20 20"><use href="#t-cam"/></svg>
<svg class="ic" style="left:535px;top:58px" width="20" height="20" viewBox="0 0 20 20"><use href="#t-img"/></svg>
<svg class="ic" style="left:658px;top:58px" width="20" height="20" viewBox="0 0 20 20"><use href="#t-map"/></svg>
<svg class="ic" style="left:681px;top:58px" width="20" height="20" viewBox="0 0 20 20"><use href="#t-lgray"/></svg>
<svg class="ic" style="left:703px;top:58px" width="20" height="20" viewBox="0 0 20 20"><use href="#t-lblue"/></svg>
<svg class="ic" style="left:724px;top:58px" width="20" height="20" viewBox="0 0 20 20"><use href="#t-lbgray"/></svg>
<svg class="ic" style="left:746px;top:58px" width="20" height="20" viewBox="0 0 20 20"><use href="#t-fire"/></svg>
<svg class="ic" style="left:768px;top:58px" width="20" height="20" viewBox="0 0 20 20"><use href="#t-bld"/></svg>
<svg class="ic" style="left:801px;top:58px" width="20" height="20" viewBox="0 0 20 20"><use href="#t-brick"/></svg>
<svg class="ic" style="left:823px;top:58px" width="20" height="20" viewBox="0 0 20 20"><use href="#t-lgreen"/></svg>
<svg class="ic" style="left:845px;top:58px" width="20" height="20" viewBox="0 0 20 20"><use href="#t-road"/></svg>
<svg class="ic" style="left:954px;top:58px" width="20" height="20" viewBox="0 0 20 20"><use href="#t-tank"/></svg>
<svg class="ic" style="left:976px;top:58px" width="20" height="20" viewBox="0 0 20 20"><use href="#t-silo"/></svg>
<svg class="ic" style="left:998px;top:58px" width="20" height="20" viewBox="0 0 20 20"><use href="#t-tank2"/></svg>
<svg class="ic" style="left:1020px;top:58px" width="20" height="20" viewBox="0 0 20 20"><use href="#t-pipe"/></svg>
<svg class="ic" style="left:1042px;top:58px" width="20" height="20" viewBox="0 0 20 20"><use href="#t-pump"/></svg>
<svg class="ic" style="left:1064px;top:58px" width="20" height="20" viewBox="0 0 20 20"><use href="#t-flex"/></svg>
<svg class="ic" style="left:1086px;top:58px" width="20" height="20" viewBox="0 0 20 20"><use href="#t-disp"/></svg>
<div class="sep" style="left:77px;top:58px;height:20px"></div>
<div class="sep" style="left:154px;top:58px;height:20px"></div>
<div class="sep" style="left:209px;top:58px;height:20px"></div>
<div class="sep" style="left:286px;top:58px;height:20px"></div>
<div class="sep" style="left:363px;top:58px;height:20px"></div>
<div class="sep" style="left:484px;top:58px;height:20px"></div>
<div class="sep" style="left:561px;top:58px;height:20px"></div>
<div class="sep" style="left:794px;top:58px;height:20px"></div>
<div class="sep" style="left:871px;top:58px;height:20px"></div>
<div class="sep" style="left:1112px;top:58px;height:20px"></div>
<div class="tb" style="left:572px;top:60px">Территория:</div>
<div class="tb" style="left:881px;top:60px">Жидкости:</div>
<div class="tb" style="left:1123px;top:60px">Газы:</div>
<svg class="ic" style="left:2px;top:86px" width="20" height="20" viewBox="0 0 20 20"><use href="#t-tank"/></svg>
<svg class="ic" style="left:24px;top:86px" width="20" height="20" viewBox="0 0 20 20"><use href="#t-sphere"/></svg>
<svg class="ic" style="left:46px;top:86px" width="20" height="20" viewBox="0 0 20 20"><use href="#t-silo"/></svg>
<svg class="ic" style="left:68px;top:86px" width="20" height="20" viewBox="0 0 20 20"><use href="#t-pipe"/></svg>
<svg class="ic" style="left:90px;top:86px" width="20" height="20" viewBox="0 0 20 20"><use href="#t-pump"/></svg>
<svg class="ic" style="left:112px;top:86px" width="20" height="20" viewBox="0 0 20 20"><use href="#t-flex"/></svg>
<svg class="ic" style="left:134px;top:86px" width="20" height="20" viewBox="0 0 20 20"><use href="#t-disp"/></svg>
<svg class="ic" style="left:354px;top:86px" width="20" height="20" viewBox="0 0 20 20"><use href="#t-spipe"/></svg>
<svg class="ic" style="left:376px;top:86px" width="20" height="20" viewBox="0 0 20 20"><use href="#t-ypipe"/></svg>
<svg class="ic" style="left:459px;top:86px" width="20" height="20" viewBox="0 0 20 20"><use href="#t-people"/></svg>
<svg class="ic" style="left:584px;top:86px" width="20" height="20" viewBox="0 0 20 20"><use href="#t-m1"/></svg>
<svg class="ic" style="left:606px;top:86px" width="20" height="20" viewBox="0 0 20 20"><use href="#t-m2"/></svg>
<svg class="ic" style="left:628px;top:86px" width="20" height="20" viewBox="0 0 20 20"><use href="#t-m3"/></svg>
<svg class="ic" style="left:716px;top:86px" width="20" height="20" viewBox="0 0 20 20"><use href="#t-hier"/></svg>
<svg class="ic" style="left:738px;top:86px" width="20" height="20" viewBox="0 0 20 20"><use href="#t-play"/></svg>
<svg class="ic" style="left:760px;top:86px" width="20" height="20" viewBox="0 0 20 20"><use href="#t-ff"/></svg>
<svg class="ic" style="left:782px;top:86px" width="20" height="20" viewBox="0 0 20 20"><use href="#t-calcp"/></svg>
<svg class="ic" style="left:804px;top:86px" width="20" height="20" viewBox="0 0 20 20"><use href="#t-doc"/></svg>
<svg class="ic" style="left:837px;top:86px" width="20" height="20" viewBox="0 0 20 20"><use href="#t-db"/></svg>
<svg class="ic" style="left:206px;top:85px" width="22" height="21" viewBox="0 0 22 21"><use href="#t-tgm"/></svg>
<div class="sep" style="left:160px;top:87px;height:18px"></div>
<div class="sep" style="left:233px;top:87px;height:18px"></div>
<div class="sep" style="left:403px;top:87px;height:18px"></div>
<div class="sep" style="left:485px;top:87px;height:18px"></div>
<div class="sep" style="left:655px;top:87px;height:18px"></div>
<div class="sep" style="left:831px;top:87px;height:18px"></div>
<div class="sep" style="left:864px;top:87px;height:18px"></div>
<div class="tb" style="left:171px;top:89px">ТГМ:</div>
<div class="tb" style="left:244px;top:89px">Магистральные:</div>
<div class="tb" style="left:412px;top:89px">Люди:</div>
<div class="tb" style="left:496px;top:89px">Измерители:</div>
<div class="tb" style="left:665px;top:89px">Расчет:</div>
<div class="a" style="left:1px;top:111px;width:298px;height:564px;border:1px solid #6a6a6a;border-right:2px solid #686868;background:#fff"></div>
<div class="a" style="left:2px;top:112px;width:295px;height:29px;background:#f0f0f0;border-bottom:1px solid #7a7a7a"></div>
<div class="a" style="left:2px;top:675px;width:296px;height:4px;background:#f3f3f3"></div>
<svg class="ic" style="left:10.5px;top:118.5px" width="12" height="12" viewBox="0 0 12 12"><use href="#l-collapse"/></svg>
<svg class="ic" style="left:32.5px;top:118.5px" width="12" height="12" viewBox="0 0 12 12"><use href="#l-expand"/></svg>
<svg class="ic" style="left:55px;top:118.5px" width="12" height="12" viewBox="0 0 12 12"><use href="#l-plus"/></svg>
<svg class="ic" style="left:74px;top:118.5px" width="12" height="12" viewBox="0 0 12 12"><use href="#l-sort"/></svg>
<svg class="ic" style="left:6px;top:148px" width="8" height="8"><path d="M0.5 6.5L6.5 6.5L6.5 0.5Z" fill="#404040"/></svg>
<svg class="ic" style="left:19px;top:144px" width="16" height="16" viewBox="0 0 16 16"><use href="#i-factory"/></svg>
<div class="tr" style="left:39px;top:146px">Автозаправочная станция</div>
<svg class="ic" style="left:21px;top:166px" width="8" height="9"><path d="M1.5 1L5.5 4.5L1.5 8Z" fill="none" stroke="#a8a8a8" stroke-width="1"/></svg>
<svg class="ic" style="left:32px;top:163px" width="16" height="16" viewBox="0 0 16 16"><use href="#i-map"/></svg>
<div class="tr" style="left:52px;top:165px">План территории</div>
<svg class="ic" style="left:21px;top:185px" width="8" height="9"><path d="M1.5 1L5.5 4.5L1.5 8Z" fill="none" stroke="#a8a8a8" stroke-width="1"/></svg>
<svg class="ic" style="left:32px;top:182px" width="16" height="16" viewBox="0 0 16 16"><use href="#i-terr"/></svg>
<div class="tr" style="left:52px;top:184px">Территория</div>
<svg class="ic" style="left:19px;top:205px" width="8" height="8"><path d="M0.5 6.5L6.5 6.5L6.5 0.5Z" fill="#404040"/></svg>
<svg class="ic" style="left:32px;top:201px" width="16" height="16" viewBox="0 0 16 16"><use href="#i-tank"/></svg>
<div class="tr" style="left:52px;top:203px">Оборудование</div>
<svg class="ic" style="left:32px;top:224px" width="8" height="8"><path d="M0.5 6.5L6.5 6.5L6.5 0.5Z" fill="#404040"/></svg>
<svg class="ic" style="left:45px;top:220px" width="16" height="16" viewBox="0 0 16 16"><use href="#i-flex"/></svg>
<div class="tr" style="left:65px;top:222px">Гибкое соединение_01</div>
<svg class="ic" style="left:47px;top:242px" width="8" height="9"><path d="M1.5 1L5.5 4.5L1.5 8Z" fill="none" stroke="#a8a8a8" stroke-width="1"/></svg>
<svg class="ic" style="left:58px;top:239px" width="16" height="16" viewBox="0 0 16 16"><use href="#i-tank"/></svg>
<div class="tr" style="left:78px;top:241px">РГС_01</div>
<svg class="ic" style="left:32px;top:262px" width="8" height="8"><path d="M0.5 6.5L6.5 6.5L6.5 0.5Z" fill="#404040"/></svg>
<svg class="ic" style="left:45px;top:258px" width="16" height="16" viewBox="0 0 16 16"><use href="#i-flex"/></svg>
<div class="tr" style="left:65px;top:260px">Гибкое соединение_02</div>
<svg class="ic" style="left:47px;top:280px" width="8" height="9"><path d="M1.5 1L5.5 4.5L1.5 8Z" fill="none" stroke="#a8a8a8" stroke-width="1"/></svg>
<svg class="ic" style="left:58px;top:277px" width="16" height="16" viewBox="0 0 16 16"><use href="#i-tank"/></svg>
<div class="tr" style="left:78px;top:279px">РГС_02</div>
<svg class="ic" style="left:45px;top:296px" width="16" height="16" viewBox="0 0 16 16"><use href="#i-disp"/></svg>
<div class="tr" style="left:65px;top:298px">ГТРК_01</div>
<svg class="ic" style="left:45px;top:315px" width="16" height="16" viewBox="0 0 16 16"><use href="#i-disp"/></svg>
<div class="tr" style="left:65px;top:317px">ТРК_01</div>
<svg class="ic" style="left:21px;top:337px" width="8" height="9"><path d="M1.5 1L5.5 4.5L1.5 8Z" fill="none" stroke="#a8a8a8" stroke-width="1"/></svg>
<svg class="ic" style="left:32px;top:334px" width="16" height="16" viewBox="0 0 16 16"><use href="#i-drops"/></svg>
<div class="tr" style="left:52px;top:336px">Горючая нагрузка</div>
<svg class="ic" style="left:21px;top:356px" width="8" height="9"><path d="M1.5 1L5.5 4.5L1.5 8Z" fill="none" stroke="#a8a8a8" stroke-width="1"/></svg>
<svg class="ic" style="left:32px;top:353px" width="16" height="16" viewBox="0 0 16 16"><use href="#i-people"/></svg>
<div class="tr" style="left:52px;top:355px">Люди</div>
<svg class="ic" style="left:19px;top:376px" width="8" height="8"><path d="M0.5 6.5L6.5 6.5L6.5 0.5Z" fill="#404040"/></svg>
<svg class="ic" style="left:32px;top:372px" width="16" height="16" viewBox="0 0 16 16"><use href="#i-pin"/></svg>
<div class="tr" style="left:52px;top:374px">Измерители</div>
<div class="a" style="left:43px;top:390px;width:156px;height:18px;background:#d9d9d9"></div>
<svg class="ic" style="left:45px;top:391px" width="16" height="16" viewBox="0 0 16 16"><use href="#i-m1"/></svg>
<div class="tr" style="left:65px;top:393px">Точечный измеритель_01</div>
<svg class="ic" style="left:45px;top:410px" width="16" height="16" viewBox="0 0 16 16"><use href="#i-m2"/></svg>
<div class="tr" style="left:65px;top:412px">Параметрический измеритель_01</div>
<div class="a" style="left:303px;top:111px;width:872px;height:70px;border:1px solid #6d6d6d;border-right:none;background:#f0eff2"></div>
<div class="lbl" style="left:314px;top:139px">Наименование</div>
<div class="a" style="left:416px;top:134px;width:200px;height:24px;background:#fff;border:1px solid #b4b4b4"></div>
<div class="lbl" style="left:420px;top:139px">Точечный измеритель_01</div>
<div class="a" style="left:622px;top:112px;width:1px;height:69px;background:#3c3c3c"></div>
<div class="lbl" style="left:633px;top:125px">Описание</div>
<div class="a" style="left:702px;top:120px;width:200px;height:25px;background:#fff;border:1px solid #b4b4b4"></div>
<div class="lbl" style="left:633px;top:154px">Цвет</div>
<div class="a" style="left:702px;top:149px;width:150px;height:25px;background:#e6e6e6;border:1px solid #adadad"></div>
<div class="a" style="left:710px;top:154px;width:14px;height:14px;background:#ee82ee;border:1px solid #333"></div>
<div class="lbl" style="left:728px;top:154px">Violet</div>
<svg class="a" style="left:838px;top:157px" width="9" height="6"><path d="M1 1L4.5 4.5L8 1" stroke="#555" fill="none" stroke-width="1.2"/></svg>
<div class="a" style="left:908px;top:112px;width:1px;height:69px;background:#3c3c3c"></div>
<div class="lbl" style="left:919px;top:139px">Потенциальный риск</div>
<div class="a" style="left:1061px;top:134px;width:100px;height:25px;background:#f7f7f7;border:1px solid #b4b4b4"></div>
<div class="lbl" style="left:1065px;top:139px;color:#7a7a7a">1,056·10<sup style="font-size:8.5px;letter-spacing:-0.5px">-7</sup><span style="margin-left:2px">год</span><sup style="font-size:8.5px;letter-spacing:-0.5px">-1</sup></div>
<div class="a" style="left:303px;top:185px;width:872px;height:470px;border:1px solid #a0a0a0;border-right:none;background:#fff"></div>
<div class="a" style="left:304px;top:186px;width:851px;height:468px;overflow:hidden">
<svg class="a" style="left:-304px;top:-186px" width="1176" height="681" viewBox="0 0 1176 681">
<line x1="430.5" y1="206" x2="430.5" y2="213" stroke="#e0e0e0" stroke-width="1"/>
<line x1="473.5" y1="206" x2="473.5" y2="213" stroke="#e0e0e0" stroke-width="1"/>
<line x1="516.5" y1="206" x2="516.5" y2="213" stroke="#e0e0e0" stroke-width="1"/>
<line x1="559.5" y1="206" x2="559.5" y2="213" stroke="#e0e0e0" stroke-width="1"/>
<line x1="602.5" y1="206" x2="602.5" y2="213" stroke="#e0e0e0" stroke-width="1"/>
<line x1="644.5" y1="206" x2="644.5" y2="213" stroke="#e0e0e0" stroke-width="1"/>
<line x1="687.5" y1="206" x2="687.5" y2="213" stroke="#e0e0e0" stroke-width="1"/>
<line x1="730.5" y1="206" x2="730.5" y2="213" stroke="#e0e0e0" stroke-width="1"/>
<line x1="772.5" y1="206" x2="772.5" y2="213" stroke="#e0e0e0" stroke-width="1"/>
<line x1="815.5" y1="206" x2="815.5" y2="213" stroke="#e0e0e0" stroke-width="1"/>
<line x1="858.5" y1="206" x2="858.5" y2="213" stroke="#e0e0e0" stroke-width="1"/>
<line x1="858.5" y1="150" x2="858.5" y2="213" stroke="#e4e4e4" stroke-width="1"/>
<rect x="430" y="188" width="421" height="18" fill="#0000ff"/>
<line x1="427" y1="213.5" x2="859" y2="213.5" stroke="#111" stroke-width="1"/>
<line x1="430.5" y1="213" x2="430.5" y2="216" stroke="#111" stroke-width="1"/>
<line x1="473.5" y1="213" x2="473.5" y2="216" stroke="#111" stroke-width="1"/>
<line x1="516.5" y1="213" x2="516.5" y2="216" stroke="#111" stroke-width="1"/>
<line x1="559.5" y1="213" x2="559.5" y2="216" stroke="#111" stroke-width="1"/>
<line x1="602.5" y1="213" x2="602.5" y2="216" stroke="#111" stroke-width="1"/>
<line x1="644.5" y1="213" x2="644.5" y2="216" stroke="#111" stroke-width="1"/>
<line x1="687.5" y1="213" x2="687.5" y2="216" stroke="#111" stroke-width="1"/>
<line x1="730.5" y1="213" x2="730.5" y2="216" stroke="#111" stroke-width="1"/>
<line x1="772.5" y1="213" x2="772.5" y2="216" stroke="#111" stroke-width="1"/>
<line x1="815.5" y1="213" x2="815.5" y2="216" stroke="#111" stroke-width="1"/>
<line x1="858.5" y1="213" x2="858.5" y2="216" stroke="#111" stroke-width="1"/>
<circle cx="617.2" cy="466.8" r="144.3" fill="#ff8c00" stroke="#3a2a10" stroke-width="0.9"/>
<path d="M617.2 466.8L737.39 546.65A144.3 144.3 0 0 1 718.70 569.37Z" fill="#ff0000" stroke="#3a1010" stroke-width="0.9" stroke-linejoin="round"/>
<path d="M497 369.3L504.5 375.2" stroke="#333" stroke-width="0.9" fill="none"/>
<path d="M737.39 546.65L746.2 551.7" stroke="#333" stroke-width="0.9" fill="none"/>
<path d="M728.63 558.49L737.1 564.5" stroke="#333" stroke-width="0.9" fill="none"/>
<rect x="362.5" y="633.5" width="9.5" height="9.5" fill="#ff0000" stroke="#333" stroke-width="0.8"/>
<rect x="517.5" y="633.5" width="9.5" height="9.5" fill="#ffff00" stroke="#333" stroke-width="0.8"/>
<rect x="685.5" y="633.5" width="9.5" height="9.5" fill="#ff8c00" stroke="#333" stroke-width="0.8"/>
</svg>
<div class="ch" style="left:94px;top:-3px;color:#444">0<span style="color:#c8c8c8">...</span></div>
<svg class="a" style="left:106px;top:1.5px" width="6" height="4"><path d="M0.5 1.5H3.5M3.5 0V3.5M2 0.5L4.5 2.5" stroke="#111" stroke-width="1"/></svg>
</div>
<div class="ch tick" style="left:390.5px;top:217px;width:80px;text-align:center">0</div>
<div class="ch tick" style="left:433.25px;top:217px;width:80px;text-align:center">2·10<sup>−4</sup></div>
<div class="ch tick" style="left:476.0px;top:217px;width:80px;text-align:center">4·10<sup>−4</sup></div>
<div class="ch tick" style="left:518.75px;top:217px;width:80px;text-align:center">6·10<sup>−4</sup></div>
<div class="ch tick" style="left:561.5px;top:217px;width:80px;text-align:center">8·10<sup>−4</sup></div>
<div class="ch tick" style="left:604.25px;top:217px;width:80px;text-align:center">1·10<sup>−3</sup></div>
<div class="ch tick" style="left:647.0px;top:217px;width:80px;text-align:center">1,2·10<sup>−3</sup></div>
<div class="ch tick" style="left:689.75px;top:217px;width:80px;text-align:center">1,4·10<sup>−3</sup></div>
<div class="ch tick" style="left:732.5px;top:217px;width:80px;text-align:center">1,6·10<sup>−3</sup></div>
<div class="ch tick" style="left:775.25px;top:217px;width:80px;text-align:center">1,8·10<sup>−3</sup></div>
<div class="ch tick" style="left:818.0px;top:217px;width:80px;text-align:center">2·10<sup>−3</sup></div>
<div class="ch" style="left:564px;top:231px;width:160px;text-align:center">Частота, год<sup>−1</sup></div>
<div class="a" id="ptitle" style="left:313.6px;top:274px;font-family:'Liberation Serif',serif;font-weight:bold;font-size:18.76px;line-height:22px;color:#484888;white-space:nowrap">Распределение опасных факторов пожара по частоте возникновения</div>
<div class="ch" style="left:361px;top:363px;">Тепловой поток 1,966·10<sup>−3</sup> год<sup>−1</sup></div>
<div class="ch" style="left:746px;top:546px;">Вспышка 5,352·10<sup>−9</sup> год<sup>−1</sup></div>
<div class="ch" style="left:737px;top:558px;">Взрыв 6,599·10<sup>−5</sup> год<sup>−1</sup></div>
<div class="ch" style="left:375px;top:633px;">Взрыв 6,599·10<sup>−5</sup> год<sup>−1</sup>: 3,25%</div>
<div class="ch" style="left:531px;top:633px;">Вспышка 5,352·10<sup>−9</sup> год<sup>−1</sup>: 0,00%</div>
<div class="ch" style="left:698px;top:633px;">Тепловой поток 1,966·10<sup>−3</sup> год<sup>−1</sup>: 96,75%</div>
<div class="a" style="left:1155px;top:188px;width:17px;height:464px;background:#f0f0f0"></div>
<svg class="a" style="left:1159.5px;top:194.5px" width="8" height="5"><path d="M0 4.5L4 0.3L8 4.5Z" fill="#4a4a4a"/></svg>
<div class="a" style="left:1158px;top:502px;width:12px;height:69px;background:#c0c0c0"></div>
<svg class="a" style="left:1159.5px;top:640.8px" width="8" height="5"><path d="M0 0.3L4 4.5L8 0.3Z" fill="#4a4a4a"/></svg>
<div class="a" style="left:305px;top:655px;width:61px;height:23px;background:#ececec;border:1px solid #adadad;border-top-color:#c8c8c8"></div>
<div class="lbl" style="left:311px;top:660px">Модель</div>
<div class="a" style="left:366px;top:654px;width:52px;height:25px;background:#fff;border:1px solid #c8c8c8;border-top:none;border-bottom:none"></div>
<div class="lbl" style="left:373px;top:661px">Отчет</div>
<div class="wb" style="left:0;top:31px;width:1px;height:650px"></div>
<div class="wb" style="left:1175px;top:31px;width:1px;height:650px"></div>
<div class="a" style="left:1174px;top:111px;width:1px;height:568px;background:#8c8c8c"></div>
<div class="wb" style="left:0;top:679px;width:1176px;height:2px"></div>
</body></html>
